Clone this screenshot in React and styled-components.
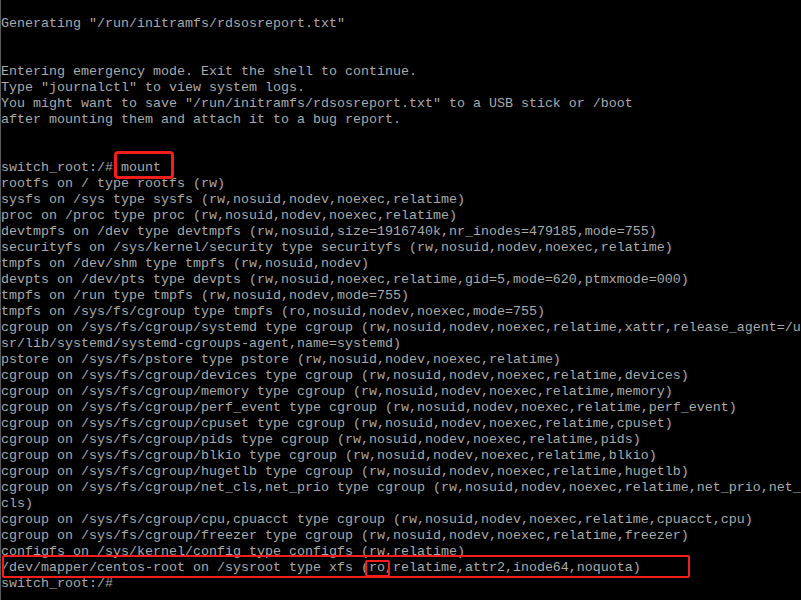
import React from 'react';
import styled, { createGlobalStyle } from 'styled-components';

const GlobalStyle = createGlobalStyle`
    html, body {
        margin: 0;
        padding: 0;
        background: #000;
    }
`;

const Screen = styled.div`
    position: relative;
    width: 800px;
    height: 600px;
    overflow: hidden;
    background: #000;
    border-left: 1px solid #5a5a5a;
`;

const Console = styled.pre`
    margin: 0;
    padding: 0;
    font-family: "Liberation Mono", "DejaVu Sans Mono", monospace;
    font-size: 13.333px;
    line-height: 16px;
    color: #aaaaaa;
    white-space: pre;
`;

const Line = styled.div`
    height: 16px;
`;

const Mark = styled.div`
    position: absolute;
    box-sizing: border-box;
    left: ${p => p.x}px;
    top: ${p => p.y}px;
    width: ${p => p.w}px;
    height: ${p => p.h}px;
    border: ${p => p.thick || 2}px solid #f41d1d;
    border-radius: ${p => p.radius || 2}px;
    pointer-events: none;
`;

const lines = [
    '',
    'Generating "/run/initramfs/rdsosreport.txt"',
    '',
    '',
    'Entering emergency mode. Exit the shell to continue.',
    'Type "journalctl" to view system logs.',
    'You might want to save "/run/initramfs/rdsosreport.txt" to a USB stick or /boot',
    'after mounting them and attach it to a bug report.',
    '',
    '',
    'switch_root:/# mount',
    'rootfs on / type rootfs (rw)',
    'sysfs on /sys type sysfs (rw,nosuid,nodev,noexec,relatime)',
    'proc on /proc type proc (rw,nosuid,nodev,noexec,relatime)',
    'devtmpfs on /dev type devtmpfs (rw,nosuid,size=1916740k,nr_inodes=479185,mode=755)',
    'securityfs on /sys/kernel/security type securityfs (rw,nosuid,nodev,noexec,relatime)',
    'tmpfs on /dev/shm type tmpfs (rw,nosuid,nodev)',
    'devpts on /dev/pts type devpts (rw,nosuid,noexec,relatime,gid=5,mode=620,ptmxmode=000)',
    'tmpfs on /run type tmpfs (rw,nosuid,nodev,mode=755)',
    'tmpfs on /sys/fs/cgroup type tmpfs (ro,nosuid,nodev,noexec,mode=755)',
    'cgroup on /sys/fs/cgroup/systemd type cgroup (rw,nosuid,nodev,noexec,relatime,xattr,release_agent=/u',
    'sr/lib/systemd/systemd-cgroups-agent,name=systemd)',
    'pstore on /sys/fs/pstore type pstore (rw,nosuid,nodev,noexec,relatime)',
    'cgroup on /sys/fs/cgroup/devices type cgroup (rw,nosuid,nodev,noexec,relatime,devices)',
    'cgroup on /sys/fs/cgroup/memory type cgroup (rw,nosuid,nodev,noexec,relatime,memory)',
    'cgroup on /sys/fs/cgroup/perf_event type cgroup (rw,nosuid,nodev,noexec,relatime,perf_event)',
    'cgroup on /sys/fs/cgroup/cpuset type cgroup (rw,nosuid,nodev,noexec,relatime,cpuset)',
    'cgroup on /sys/fs/cgroup/pids type cgroup (rw,nosuid,nodev,noexec,relatime,pids)',
    'cgroup on /sys/fs/cgroup/blkio type cgroup (rw,nosuid,nodev,noexec,relatime,blkio)',
    'cgroup on /sys/fs/cgroup/hugetlb type cgroup (rw,nosuid,nodev,noexec,relatime,hugetlb)',
    'cgroup on /sys/fs/cgroup/net_cls,net_prio type cgroup (rw,nosuid,nodev,noexec,relatime,net_prio,net_',
    'cls)',
    'cgroup on /sys/fs/cgroup/cpu,cpuacct type cgroup (rw,nosuid,nodev,noexec,relatime,cpuacct,cpu)',
    'cgroup on /sys/fs/cgroup/freezer type cgroup (rw,nosuid,nodev,noexec,relatime,freezer)',
    'configfs on /sys/kernel/config type configfs (rw,relatime)',
    '/dev/mapper/centos-root on /sysroot type xfs (ro,relatime,attr2,inode64,noquota)',
    'switch_root:/#',
];

export default function App () {
    return (
        <>
            <GlobalStyle />
            <Screen>
                <Console>
                    {lines.map((text, i) => (
                        <Line key={i}>{text}</Line>
                    ))}
                </Console>

                {/* red annotation boxes */}
                <Mark x={113} y={151} w={60} h={28} thick={3} radius={4} />
                <Mark x={1} y={555} w={688} h={23} />
                <Mark x={364} y={560} w={25} h={17} />
            </Screen>
        </>
    );
}
